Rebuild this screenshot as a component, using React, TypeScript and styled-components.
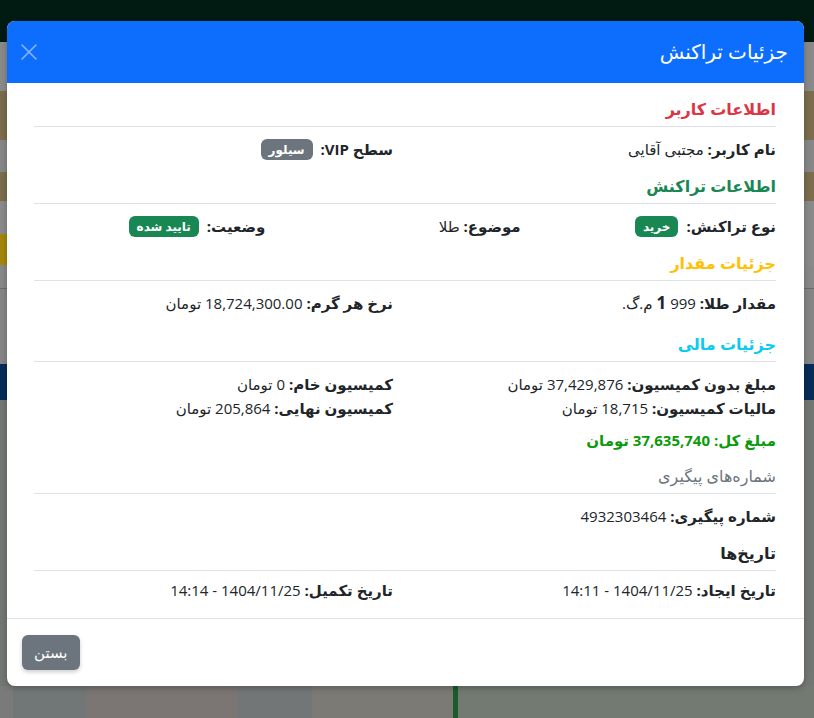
import React from "react";
import styled, { createGlobalStyle } from "styled-components";

const GlobalStyle = createGlobalStyle`
  html, body {
    margin: 0;
    padding: 0;
  }
  body {
    font-family: "Open Sans", "DejaVu Sans", sans-serif;
    background: #737773;
    color: #212529;
    overflow: hidden;
  }
  * {
    box-sizing: border-box;
  }
`;

const Page = styled.div`
  position: relative;
  width: 814px;
  height: 718px;
  overflow: hidden;
  display: flex;
  flex-direction: column;
`;

const Band = styled.div<{ $h: number; $bg: string; $line?: boolean }>`
  flex: 0 0 ${(p) => p.$h}px;
  background: ${(p) => p.$bg};
  border-bottom: ${(p) => (p.$line ? "1px solid #6b6b6b" : "none")};
  display: flex;
`;

const Chip = styled.div<{ $w: number; $bg: string }>`
  flex: 0 0 ${(p) => p.$w}px;
  background: ${(p) => p.$bg};
`;

const Overlay = styled.div`
  position: absolute;
  inset: 0;
  display: flex;
  align-items: flex-start;
  padding: 21px 0 0 7px;
`;

const Modal = styled.div`
  width: 797px;
  background: #fff;
  border-radius: 8px;
  box-shadow: 0 2px 6px rgba(0, 0, 0, 0.25);
  direction: rtl;
`;

const Header = styled.div`
  height: 62px;
  padding: 0 16px;
  background: #0d6efd;
  border-radius: 8px 8px 0 0;
  display: flex;
  align-items: center;
  justify-content: space-between;
`;

const Title = styled.h5`
  margin: 0;
  color: #fff;
  font-size: 20px;
  font-weight: 400;
  line-height: 24px;
`;

const CloseButton = styled.button`
  border: 0;
  background: transparent;
  padding: 4px;
  margin-left: -6px;
  display: flex;
  cursor: pointer;
  opacity: 0.5;
`;

const Body = styled.div`
  padding: 17px 28px 16px 27px;
`;

const SectionTitle = styled.h6<{ $color: string; $light?: boolean; $mb?: number }>`
  margin: 0 0 ${(p) => p.$mb ?? 10}px;
  padding-bottom: 7px;
  border-bottom: 1px solid #dee2e6;
  font-size: 16px;
  line-height: 19px;
  height: 27px;
  font-weight: ${(p) => (p.$light ? 400 : 600)};
  color: ${(p) => p.$color};
`;

const Row = styled.div<{ $cols?: number; $mb?: number }>`
  display: grid;
  grid-template-columns: repeat(${(p) => p.$cols ?? 2}, 1fr);
  column-gap: 24px;
  margin-bottom: ${(p) => p.$mb ?? 16}px;
  font-size: 15px;
  line-height: 24px;
`;

const Line = styled.div<{ $color?: string; $bold?: boolean }>`
  height: 24px;
  color: ${(p) => p.$color ?? "#212529"};
  font-weight: ${(p) => (p.$bold ? 700 : 400)};
  white-space: nowrap;
`;

const Label = styled.strong`
  font-weight: 700;
`;

const Big = styled.strong`
  font-size: 17px;
  font-weight: 700;
`;

const Badge = styled.span<{ $bg: string }>`
  display: inline-block;
  padding: 4px 8px;
  margin-right: 4px;
  border-radius: 6px;
  background: ${(p) => p.$bg};
  color: #fff;
  font-size: 12px;
  font-weight: 700;
  line-height: 13px;
  vertical-align: 1px;
`;

const Footer = styled.div`
  border-top: 1px solid #dee2e6;
  padding: 16px 15px;
  display: flex;
  justify-content: flex-end;
`;

const Button = styled.button`
  border: 0;
  border-radius: 6px;
  background: #6c757d;
  color: #fff;
  font-family: inherit;
  font-size: 15px;
  line-height: 23px;
  height: 35px;
  padding: 6px 12px;
  box-shadow: 0 2px 4px rgba(0, 0, 0, 0.2);
  cursor: pointer;
`;

export default function App() {
  return (
    <>
      <GlobalStyle />
      <Page>
        <Band $h={42} $bg="#021b12" />
        <Band $h={49} $bg="#8a8a8a" />
        <Band $h={49} $bg="#7b6d4d" />
        <Band $h={32} $bg="#878787" />
        <Band $h={29} $bg="#7b6d4d" />
        <Band $h={33} $bg="#8a8a8a" />
        <Band $h={31} $bg="#8a8a8a">
          <Chip $w={30} $bg="#a5860d" />
        </Band>
        <Band $h={24} $bg="#888888" $line />
        <Band $h={75} $bg="#858585" />
        <Band $h={36} $bg="#062c59" />
        <Band $h={286} $bg="#737773" />
        <Band $h={32} $bg="#737773">
          <Chip $w={13} $bg="#7a7a7a" />
          <Chip $w={74} $bg="#717677" />
          <Chip $w={150} $bg="#7b7574" />
          <Chip $w={75} $bg="#727677" />
          <Chip $w={141} $bg="#7c7a74" />
          <Chip $w={5} $bg="#1a5c2a" />
          <Chip $w={356} $bg="#727a72" />
        </Band>

        <Overlay>
          <Modal>
            <Header>
              <Title>جزئیات تراکنش</Title>
              <CloseButton aria-label="بستن">
                <svg width="16" height="16" viewBox="0 0 16 16">
                  <path
                    d="M1 1 L15 15 M15 1 L1 15"
                    stroke="#fff"
                    strokeWidth="1.6"
                    strokeLinecap="round"
                  />
                </svg>
              </CloseButton>
            </Header>

            <Body>
              <SectionTitle $color="#dc3545">اطلاعات کاربر</SectionTitle>
              <Row>
                <Line>
                  <Label>نام کاربر:</Label> مجتبی آقایی
                </Line>
                <Line>
                  <Label>سطح VIP:</Label> <Badge $bg="#6c757d">سیلور</Badge>
                </Line>
              </Row>

              <SectionTitle $color="#198754">اطلاعات تراکنش</SectionTitle>
              <Row $cols={3}>
                <Line>
                  <Label>نوع تراکنش:</Label> <Badge $bg="#198754">خرید</Badge>
                </Line>
                <Line>
                  <Label>موضوع:</Label> طلا
                </Line>
                <Line>
                  <Label>وضعیت:</Label> <Badge $bg="#198754">تایید شده</Badge>
                </Line>
              </Row>

              <SectionTitle $color="#ffc107">جزئیات مقدار</SectionTitle>
              <Row $mb={20}>
                <Line>
                  <Label>مقدار طلا:</Label> 999 <Big>1</Big> م.گ.
                </Line>
                <Line>
                  <Label>نرخ هر گرم:</Label> 18,724,300.00 تومان
                </Line>
              </Row>

              <SectionTitle $color="#0dcaf0">جزئیات مالی</SectionTitle>
              <Row $mb={8}>
                <div>
                  <Line>
                    <Label>مبلغ بدون کمیسیون:</Label> 37,429,876 تومان
                  </Line>
                  <Line>
                    <Label>مالیات کمیسیون:</Label> 18,715 تومان
                  </Line>
                </div>
                <div>
                  <Line>
                    <Label>کمیسیون خام:</Label> 0 تومان
                  </Line>
                  <Line>
                    <Label>کمیسیون نهایی:</Label> 205,864 تومان
                  </Line>
                </div>
              </Row>
              <Row $cols={1} $mb={15}>
                <Line $color="#0d9a0d" $bold>
                  مبلغ کل: 37,635,740 تومان
                </Line>
              </Row>

              <SectionTitle $color="#6c757d" $light>
                شماره‌های پیگیری
              </SectionTitle>
              <Row>
                <Line>
                  <Label>شماره پیگیری:</Label> 4932303464
                </Line>
              </Row>

              <SectionTitle $color="#212529" $mb={7}>
                تاریخ‌ها
              </SectionTitle>
              <Row $mb={0}>
                <Line>
                  <Label>تاریخ ایجاد:</Label> 1404/11/25 - 14:11
                </Line>
                <Line>
                  <Label>تاریخ تکمیل:</Label> 1404/11/25 - 14:14
                </Line>
              </Row>
            </Body>

            <Footer>
              <Button>بستن</Button>
            </Footer>
          </Modal>
        </Overlay>
      </Page>
    </>
  );
}
